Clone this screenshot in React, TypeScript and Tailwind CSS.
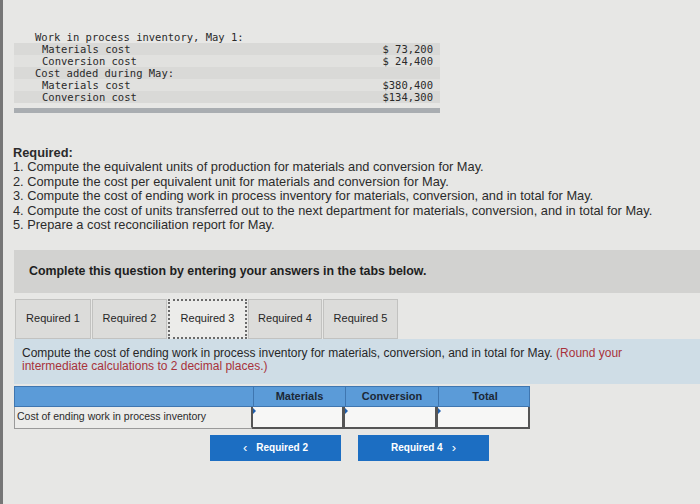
export default function App() {
  const tabs = [
    { label: "Required 1", w: "w-[76px]", active: false },
    { label: "Required 2", w: "w-[75px]", active: false },
    { label: "Required 3", w: "w-[79px]", active: true },
    { label: "Required 4", w: "w-[74px]", active: false },
    { label: "Required 5", w: "w-[75px]", active: false },
  ];
  const rows = [
    { label: "Work in process inventory, May 1:", indent: false, value: "", bg: "" },
    { label: "Materials cost", indent: true, value: "$ 73,200", bg: "bg-[#d9d9d7]" },
    { label: "Conversion cost", indent: true, value: "$ 24,400", bg: "bg-[#e1e1df]" },
    { label: "Cost added during May:", indent: false, value: "", bg: "bg-[#d9d9d7]" },
    { label: "Materials cost", indent: true, value: "$380,400", bg: "bg-[#e1e1df]" },
    { label: "Conversion cost", indent: true, value: "$134,300", bg: "bg-[#d9d9d7]" },
  ];
  return (
    <div className="w-[700px] h-[504px] overflow-hidden bg-[#e7e7e5] border-l-[3px] border-[#767676] font-['Liberation_Sans',Arial,sans-serif] text-[#262626]">
      {/* data table */}
      <div className="ml-[11px] pt-[31px] w-[426px] font-['DejaVu_Sans_Mono',monospace] text-[10.5px] text-[#2a2a2a]">
        {rows.map((r, i) => (
          <div
            key={i}
            className={`flex justify-between h-[12px] leading-[12px] pr-[7px] whitespace-pre ${r.bg} ${r.indent ? "pl-[28px]" : "pl-[21px]"}`}
          >
            <span>{r.label}</span>
            <span>{r.value}</span>
          </div>
        ))}
        <div className="mt-[5px] h-[5px] bg-[#a9adb1]" />
      </div>

      {/* required */}
      <div className="ml-[10px] mt-[32px] text-[12.8px] text-[#2b2b2b]">
        <div className="font-bold leading-[15px]">Required:</div>
        <div className="leading-[14.5px]">
          <div>1. Compute the equivalent units of production for materials and conversion for May.</div>
          <div>2. Compute the cost per equivalent unit for materials and conversion for May.</div>
          <div>3. Compute the cost of ending work in process inventory for materials, conversion, and in total for May.</div>
          <div>4. Compute the cost of units transferred out to the next department for materials, conversion, and in total for May.</div>
          <div>5. Prepare a cost reconciliation report for May.</div>
        </div>
      </div>

      {/* instruction box */}
      <div className="ml-[11px] mt-[17px] h-[43px] bg-[#d2d2d0] pl-[15px] flex items-center">
        <span className="font-bold text-[12.4px] text-[#1e1e1e]">
          Complete this question by entering your answers in the tabs below.
        </span>
      </div>

      {/* tabs */}
      <div className="ml-[12px] mt-[6px] flex gap-[1px] items-end">
        {tabs.map((t) => (
          <div
            key={t.label}
            className={`${t.w} h-[40px] flex items-center justify-center text-[11px] ${
              t.active
                ? "bg-[#ececea] border-2 border-dotted border-[#6a6a6a]"
                : "bg-[#dcdcda] border border-[#c2c2c0]"
            }`}
          >
            {t.label}
          </div>
        ))}
      </div>

      {/* blue panel */}
      <div className="ml-[11px] h-[45px] bg-[#cfdde6] pl-[8px] pt-[8px] pr-[40px] text-[12px] leading-[13px] text-[#262626]">
        <p>
          Compute the cost of ending work in process inventory for materials, conversion, and in total for May.{" "}
          <span className="text-[#a8323a]">(Round your intermediate calculations to 2 decimal places.)</span>
        </p>
      </div>

      {/* table */}
      <div className="ml-[11px] mt-[2px] w-[516px] text-[11px]">
        <div className="grid grid-cols-[238px_92px_93px_93px] h-[21px] bg-[#5b9bd8] border border-[#3f76b0]">
          <div />
          <div className="border-l border-[#3f76b0] flex items-center justify-center font-bold text-[#1c2836]">Materials</div>
          <div className="border-l border-[#3f76b0] flex items-center justify-center font-bold text-[#1c2836]">Conversion</div>
          <div className="border-l border-[#3f76b0] flex items-center justify-center font-bold text-[#1c2836]">Total</div>
        </div>
        <div className="grid grid-cols-[238px_92px_93px_93px] h-[22px]">
          <div className="bg-[#ececea] border border-t-0 border-[#9a9a9a] flex items-center pl-[2px] text-[10.5px] text-[#2a2a2a]">
            Cost of ending work in process inventory
          </div>
          {[0, 1, 2].map((k) => (
            <div key={k} className="relative bg-[#f7f7f6] border-2 border-t-0 border-l-0 border-[#555]">
              <div className="absolute left-0 top-0 w-0 h-0 border-t-[4px] border-b-[4px] border-l-[4px] border-t-transparent border-b-transparent border-l-[#1f5fae]" />
              <div className="absolute left-[-1px] top-0 bottom-0 w-[2px] bg-[#555]" />
            </div>
          ))}
        </div>
      </div>

      {/* buttons */}
      <div className="flex pl-[207px] mt-[6px] gap-[17px]">
        <div className="w-[131px] h-[26px] bg-[#1c6ec2] flex items-center justify-center text-white font-bold text-[10px]">
          <span className="mr-[9px] text-[13px] leading-none font-normal">‹</span>Required 2
        </div>
        <div className="w-[131px] h-[26px] bg-[#1c6ec2] flex items-center justify-center text-white font-bold text-[10px]">
          Required 4<span className="ml-[9px] text-[13px] leading-none font-normal">›</span>
        </div>
      </div>
    </div>
  );
}
